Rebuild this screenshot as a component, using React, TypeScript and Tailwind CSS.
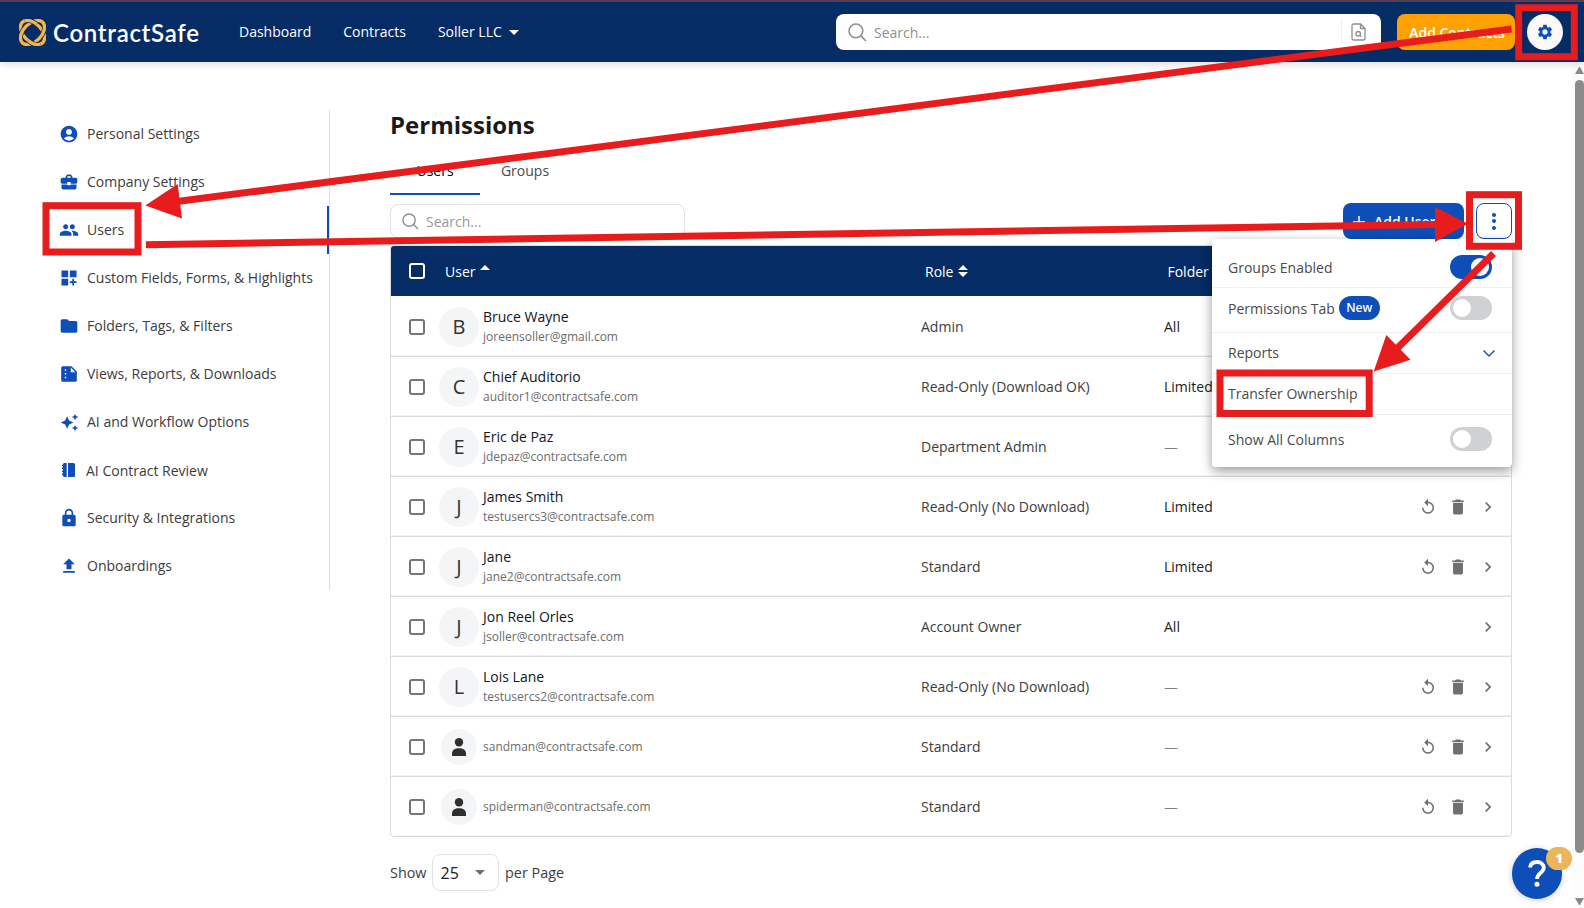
import React from 'react';
import {
  MdAccountCircle,
  MdAutoAwesome,
  MdBusinessCenter,
  MdChevronRight,
  MdDashboardCustomize,
  MdDelete,
  MdFolder,
  MdGroup,
  MdLock,
  MdReplay,
  MdSettings,
  MdUpload,
} from 'react-icons/md';

interface User {
  name?: string;
  email: string;
  role: string;
  folder: string;
  owner?: boolean;
}

const users: User[] = [
  { name: 'Bruce Wayne', email: 'joreensoller@gmail.com', role: 'Admin', folder: 'All' },
  { name: 'Chief Auditorio', email: 'auditor1@contractsafe.com', role: 'Read-Only (Download OK)', folder: 'Limited' },
  { name: 'Eric de Paz', email: 'jdepaz@contractsafe.com', role: 'Department Admin', folder: '—' },
  { name: 'James Smith', email: 'testusercs3@contractsafe.com', role: 'Read-Only (No Download)', folder: 'Limited' },
  { name: 'Jane', email: 'jane2@contractsafe.com', role: 'Standard', folder: 'Limited' },
  { name: 'Jon Reel Orles', email: 'jsoller@contractsafe.com', role: 'Account Owner', folder: 'All', owner: true },
  { name: 'Lois Lane', email: 'testusercs2@contractsafe.com', role: 'Read-Only (No Download)', folder: '—' },
  { email: 'sandman@contractsafe.com', role: 'Standard', folder: '—' },
  { email: 'spiderman@contractsafe.com', role: 'Standard', folder: '—' },
];

const ReportIcon = () => (
  <svg viewBox="0 0 20 20" className="h-5 w-5" fill="currentColor">
    <path
      fillRule="evenodd"
      d="M3.700 2.200h8.800l5.300 5.300v8.800a1.500 1.500 0 0 1-1.500 1.500H3.700a1.500 1.500 0 0 1-1.500-1.500V3.700a1.500 1.500 0 0 1 1.500-1.500zM11.800 3.600v4.600h4.600zM5.800 5.300v1.500h1.400V5.300zM5.800 9v1.500h1.400V9zM5.800 12.700v1.500h1.400v-1.500z"
    />
  </svg>
);

const NotebookIcon = () => (
  <svg viewBox="0 0 20 20" className="h-5 w-5" fill="currentColor">
    <path d="M5 3h2.700v14H5.500a1.500 1.500 0 0 1-1.500-1.500V15H3v-1.500h1V12H3v-1.500h1V9H3V7.500h1V6H3V4.700h1A1.500 1.500 0 0 1 5 3z" />
    <path d="M9 3h5.500A1.500 1.500 0 0 1 16 4.500v11a1.500 1.500 0 0 1-1.500 1.500H9z" />
  </svg>
);

const SearchIcon = ({ className }: { className: string }) => (
  <svg viewBox="0 0 18 18" className={className} fill="none" stroke="#8f8f8f" strokeWidth="1.500">
    <circle cx="7.500" cy="7.500" r="6.500" />
    <path d="M12 12l5 5" />
  </svg>
);

// Two interlaced rings: the first one passes back over the second at two of the crossings
const Logo = () => (
  <svg viewBox="0 0 27 27" className="h-[27px] w-[27px]" fill="none" stroke="#f5b44c" strokeWidth="3.400">
    <ellipse cx="13.500" cy="13.500" rx="14.400" ry="9" transform="rotate(45 13.500 13.500)" />
    <g transform="rotate(-45 13.500 13.500)">
      <ellipse cx="13.500" cy="13.500" rx="14.400" ry="9" stroke="#052c65" strokeWidth="4.800" />
      <ellipse cx="13.500" cy="13.500" rx="14.400" ry="9" />
    </g>
    <g transform="rotate(45 13.500 13.500)" strokeDasharray="1.400 2.600" strokeDashoffset="-0.300">
      <ellipse cx="13.500" cy="13.500" rx="14.400" ry="9" pathLength={8} stroke="#052c65" strokeWidth="4.800" />
      <ellipse cx="13.500" cy="13.500" rx="14.400" ry="9" pathLength={8} />
    </g>
  </svg>
);

const navItems = [
  { label: 'Personal Settings', icon: <MdAccountCircle size={20} /> },
  { label: 'Company Settings', icon: <MdBusinessCenter size={20} /> },
  { label: 'Users', icon: <MdGroup size={20} />, active: true },
  { label: 'Custom Fields, Forms, & Highlights', icon: <MdDashboardCustomize size={20} /> },
  { label: 'Folders, Tags, & Filters', icon: <MdFolder size={20} /> },
  { label: 'Views, Reports, & Downloads', icon: <ReportIcon /> },
  { label: 'AI and Workflow Options', icon: <MdAutoAwesome size={19} /> },
  { label: 'AI Contract Review', icon: <NotebookIcon />, nudge: true },
  { label: 'Security & Integrations', icon: <MdLock size={20} /> },
  { label: 'Onboardings', icon: <MdUpload size={20} /> },
];

const Header = () => (
  <header className="relative z-10 flex h-[62px] w-full items-center border-t-2 border-[#5b3c50] bg-[#052c65] pl-[19px] text-sm text-white shadow-[0_2px_8px_rgba(0,0,0,0.15)]">
    <Logo />
    <span className="ml-[7px] w-[186px] pt-px font-[Lato] text-[24px] leading-7 font-semibold tracking-[0.7px]">ContractSafe</span>
    <nav className="flex items-center gap-8">
      <span>Dashboard</span>
      <span>Contracts</span>
      <span className="flex items-center gap-[7px]">
        Soller LLC
        <svg viewBox="0 0 10 5" className="h-[5px] w-[10px]" fill="currentColor">
          <path d="M0 0h10L5 5z" />
        </svg>
      </span>
    </nav>
    <div className="ml-auto flex h-9 w-[545px] items-center rounded-lg bg-white pl-3">
      <SearchIcon className="h-[19px] w-[19px]" />
      <span className="ml-[7px] pt-0.5 text-sm text-[#8f8f8f]">Search...</span>
      <div className="ml-auto flex h-6 w-10 items-center border-l border-[#eeeeee] pl-[9px]">
        <svg viewBox="0 0 15 18" className="h-[18px] w-[15px]" fill="none" stroke="#8f8f8f" strokeWidth="1.300">
          <path d="M9.500 1H2.500A1.500 1.500 0 0 0 1 2.500v13A1.500 1.500 0 0 0 2.500 17h10a1.500 1.500 0 0 0 1.500-1.500v-10zM9.500 1v4.500H14" />
          <circle cx="7.200" cy="10.800" r="2.300" />
          <path d="M9 12.500l1.300 1.300" />
        </svg>
      </div>
    </div>
    <button className="ml-4 h-9 w-[118px] rounded-lg bg-[#ffa100] pt-0.5 pl-0.5 text-sm font-semibold">Add Contracts</button>
    <button className="mr-[21px] ml-3 flex h-9 w-9 items-center justify-center rounded-full bg-[#fafafa] text-[#0d4eb8]">
      <MdSettings size={18} />
    </button>
  </header>
);

const Sidebar = () => (
  <aside className="mt-12 ml-[59px] h-[480px] w-[271px] border-r border-[#dddddd] text-[#3c3c3c]">
    {navItems.map((item) => (
      <div key={item.label} className="-mr-px flex h-12 items-center">
        <span className="flex w-5 justify-center text-[#0d4eb8]">{item.icon}</span>
        <span className={`text-sm whitespace-nowrap ${item.nudge ? 'ml-[7px] pt-0.5' : 'ml-2'}`}>{item.label}</span>
        {item.active && <span className="mr-px ml-auto h-12 w-0.5 bg-[#0d4eb8]" />}
      </div>
    ))}
  </aside>
);

const Checkbox = ({ className }: { className: string }) => (
  <span className={`block h-4 w-4 shrink-0 rounded-[3px] border-2 ${className}`} />
);

const UserRow = ({ user }: { user: User }) => (
  <div className="flex h-[60px] items-center border-b border-[#dedede] pl-[18px] text-sm shadow-[inset_0_-1px_#f2f2f2]">
    <Checkbox className="border-[#757575]" />
    <div className="flex w-[54px] justify-end">
      {user.name ? (
        <span className="flex h-10 w-10 items-center justify-center rounded-full bg-[#f4f5f7] text-xl text-[#333333]">
          {user.name[0]}
        </span>
      ) : (
        <span className="mr-0.5 flex h-9 w-9 items-center justify-center rounded-full bg-[#f4f5f7]">
          <svg viewBox="0 0 14 18" className="h-[18px] w-[14px]" fill="#2f2f2f">
            <circle cx="7" cy="4.200" r="4.200" />
            <path d="M0 18v-2.500C0 12 3 10.200 7 10.200s7 1.800 7 5.300V18z" />
          </svg>
        </span>
      )}
    </div>
    <div className="ml-1 w-[438px]">
      {user.name && <p className="leading-5 font-medium text-[#0d1526]">{user.name}</p>}
      <p className="text-xs leading-5 text-[#6b6b6b]">{user.email}</p>
    </div>
    <span className="w-[243px] text-[#3c3c3c]">{user.role}</span>
    <span className={user.folder === '—' ? 'pt-px font-light text-[#222222]' : 'text-[#222222]'}>{user.folder}</span>
    <div className="mr-[13px] ml-auto flex items-center gap-3 text-[#6f6f6f]">
      {!user.owner && (
        <>
          <MdReplay size={18} />
          <MdDelete size={18} className="scale-110" />
        </>
      )}
      <MdChevronRight size={20} className="-ml-px" />
    </div>
  </div>
);

const Toggle = ({ on }: { on?: boolean }) => (
  <span className={`ml-auto flex h-6 w-[42px] items-center rounded-full px-[3px] ${on ? 'justify-end bg-[#0d4eb8]' : 'bg-[#d0d1d3]'}`}>
    <span className="h-[18px] w-[18px] rounded-full bg-white" />
  </span>
);

const OptionsMenu = () => (
  <div className="absolute top-[239px] left-[1212px] z-20 w-[300px] rounded bg-white text-sm text-[#4a4a4a] shadow-[0_4px_12px_rgba(0,0,0,0.4)]">
    <div className="flex h-[49px] items-center border-b border-[#f0f0f0] pt-[7px] pr-5 pl-4">
      <span className="pt-0.5">Groups Enabled</span>
      <Toggle on />
    </div>
    <div className="flex h-[45px] items-center border-b border-[#f0f0f0] pr-5 pb-[5px] pl-4">
      <span className="pt-0.5">Permissions Tab</span>
      <span className="ml-1 flex h-6 w-[41px] items-center justify-center rounded-full bg-[#0d4eb8] text-xs font-semibold text-white">New</span>
      <Toggle />
    </div>
    <div className="flex h-[41px] items-center border-b border-[#f0f0f0] pr-[17px] pl-4">
      Reports
      <svg viewBox="0 0 12 7" className="ml-auto h-[7px] w-3" fill="none" stroke="#0d4eb8" strokeWidth="1.400">
        <path d="M0.500 0.500L6 6l5.500-5.500" />
      </svg>
    </div>
    <div className="flex h-[41px] items-center border-b border-[#f0f0f0] px-4">Transfer Ownership</div>
    <div className="flex h-[52px] items-center pr-5 pb-1 pl-4">
      <span className="pt-0.5">Show All Columns</span>
      <Toggle />
    </div>
  </div>
);

const Annotations = () => (
  <svg viewBox="0 0 1584 908" className="pointer-events-none absolute top-0 left-0 z-30 h-[908px] w-[1584px]" fill="#e81c1c">
    <g fill="none" stroke="#e81c1c" strokeWidth="7">
      <rect x="1518.700" y="7.700" width="55.600" height="49" />
      <rect x="46" y="205.700" width="92" height="46.300" />
      <rect x="1469.500" y="194.700" width="49" height="51.600" />
      <rect x="1220" y="373" width="149.200" height="40.500" />
      <path d="M1511.500 29L179 201.300" />
      <path d="M146 244.800L1436 224.500" />
      <path d="M1493.500 253.500L1397 348.500" />
    </g>
    <path d="M145.300 205.400L177.700 184l4.300 34.500z" />
    <path d="M1468 223.700L1435 207v35z" />
    <path d="M1373.700 371.500L1386.300 335l24.200 24.700z" />
  </svg>
);

const App: React.FC = () => (
  <div className="relative h-[908px] w-[1584px] overflow-hidden bg-white font-['Open_Sans',sans-serif]">
    <Header />
    <div className="flex h-[846px]">
      <Sidebar />
      <main className="ml-[60px] w-[1122px]">
        <h1 className="mt-[45px] text-2xl leading-9 font-bold text-[#1a1a1a]">Permissions</h1>
        <div className="mt-1 flex h-12 text-sm">
          <span className="flex w-[90px] items-center justify-center border-b-2 border-[#0d4eb8] pt-0.5 font-medium text-black">Users</span>
          <span className="flex w-[90px] items-center justify-center text-[#4a4a4a]">Groups</span>
        </div>
        <div className="mt-2 flex h-9 items-start">
          <div className="mt-px flex h-[34px] w-[295px] items-center rounded-lg border border-[#e2e2e2] pl-[11px]">
            <SearchIcon className="h-[17px] w-[17px]" />
            <span className="ml-[7px] pt-0.5 text-sm text-[#999999]">Search...</span>
          </div>
          <button className="ml-auto flex h-9 w-[121px] items-center rounded-lg bg-[#0d4eb8] pt-0.5 pl-2.5 text-sm font-semibold text-white">
            <svg viewBox="0 0 12 12" className="mr-[9px] h-3 w-3" stroke="currentColor" strokeWidth="1.500">
              <path d="M6 0v12M0 6h12" />
            </svg>
            Add Users
          </button>
          <button className="ml-3 flex h-9 w-9 flex-col items-center justify-center gap-[2.500px] rounded-lg border border-[#0d4eb8]">
            <span className="h-1 w-1 rounded-full bg-[#0d4eb8]" />
            <span className="h-1 w-1 rounded-full bg-[#0d4eb8]" />
            <span className="h-1 w-1 rounded-full bg-[#0d4eb8]" />
          </button>
        </div>
        <div className="mt-1.5 overflow-hidden rounded border border-[#dcdcdc]">
          <div className="flex h-[50px] items-center bg-[#052c65] pl-[18px] text-sm text-white">
            <Checkbox className="border-white" />
            <span className="ml-5 w-[35px] pt-0.5">User</span>
            <svg viewBox="0 0 10 5" className="-mt-2 h-[5px] w-[10px]" fill="currentColor">
              <path d="M0 5h10L5 0z" />
            </svg>
            <span className="ml-[435px] pt-0.5">Role</span>
            <svg viewBox="0 0 10 12" className="ml-[5px] h-3 w-[10px]" fill="currentColor">
              <path d="M0 5h10L5 0zM0 7h10l-5 5z" />
            </svg>
            <span className="ml-[199px] pt-0.5">Folder</span>
          </div>
          <div className="-mb-px pt-px">
            {users.map((user) => (
              <UserRow key={user.email} user={user} />
            ))}
          </div>
        </div>
        <div className="mt-[17px] flex items-center text-[14.400px] text-[#3c3c3c]">
          <span className="w-[42px]">Show</span>
          <span className="flex h-[37px] w-[67px] items-center justify-between rounded-lg border border-[#e2e2e2] pr-[13px] pl-[7.500px] text-base text-[#222222]">
            25
            <svg viewBox="0 0 10 5" className="h-[5px] w-[10px]" fill="#707070">
              <path d="M0 0h10L5 5z" />
            </svg>
          </span>
          <span className="ml-1.5">per Page</span>
        </div>
      </main>
      <div className="ml-auto flex w-3 flex-col items-end bg-[#fcfcfc] pt-[5px] pb-[3px]">
        <svg viewBox="0 0 9 7" className="h-[7px] w-[9px]" fill="#8b8b8b">
          <path d="M0 7L4 0h1l4 7z" />
        </svg>
        <div className="mt-1.5 h-[773px] w-[9px] rounded-full bg-[#8b8b8b]" />
        <svg viewBox="0 0 9 7" className="mt-auto h-[7px] w-[9px]" fill="#8b8b8b">
          <path d="M0 0l4 7h1l4-7z" />
        </svg>
      </div>
    </div>
    <OptionsMenu />
    <div className="absolute top-[848px] left-[1512px] flex h-[51px] w-[50px] items-center justify-center rounded-full bg-[#0d4eb8] shadow-[0_1px_6px_rgba(0,0,0,0.2)]">
      <svg viewBox="0 0 18 27" className="h-[27px] w-[18px]" fill="none" stroke="white" strokeWidth="3.800">
        <path d="M2 7.500C2.500 3.500 5.500 2 9 2s6.800 2 6.800 5.800c0 5.200-6.700 4.700-6.700 11.200" />
        <circle cx="9" cy="24.300" r="2.500" fill="white" stroke="none" />
      </svg>
      <span className="absolute -top-px left-[34px] flex h-[23px] w-[26px] items-center justify-center rounded-full bg-[#ebb55a] text-[13px] font-extrabold text-white">1</span>
    </div>
    <Annotations />
  </div>
);

export default App;
